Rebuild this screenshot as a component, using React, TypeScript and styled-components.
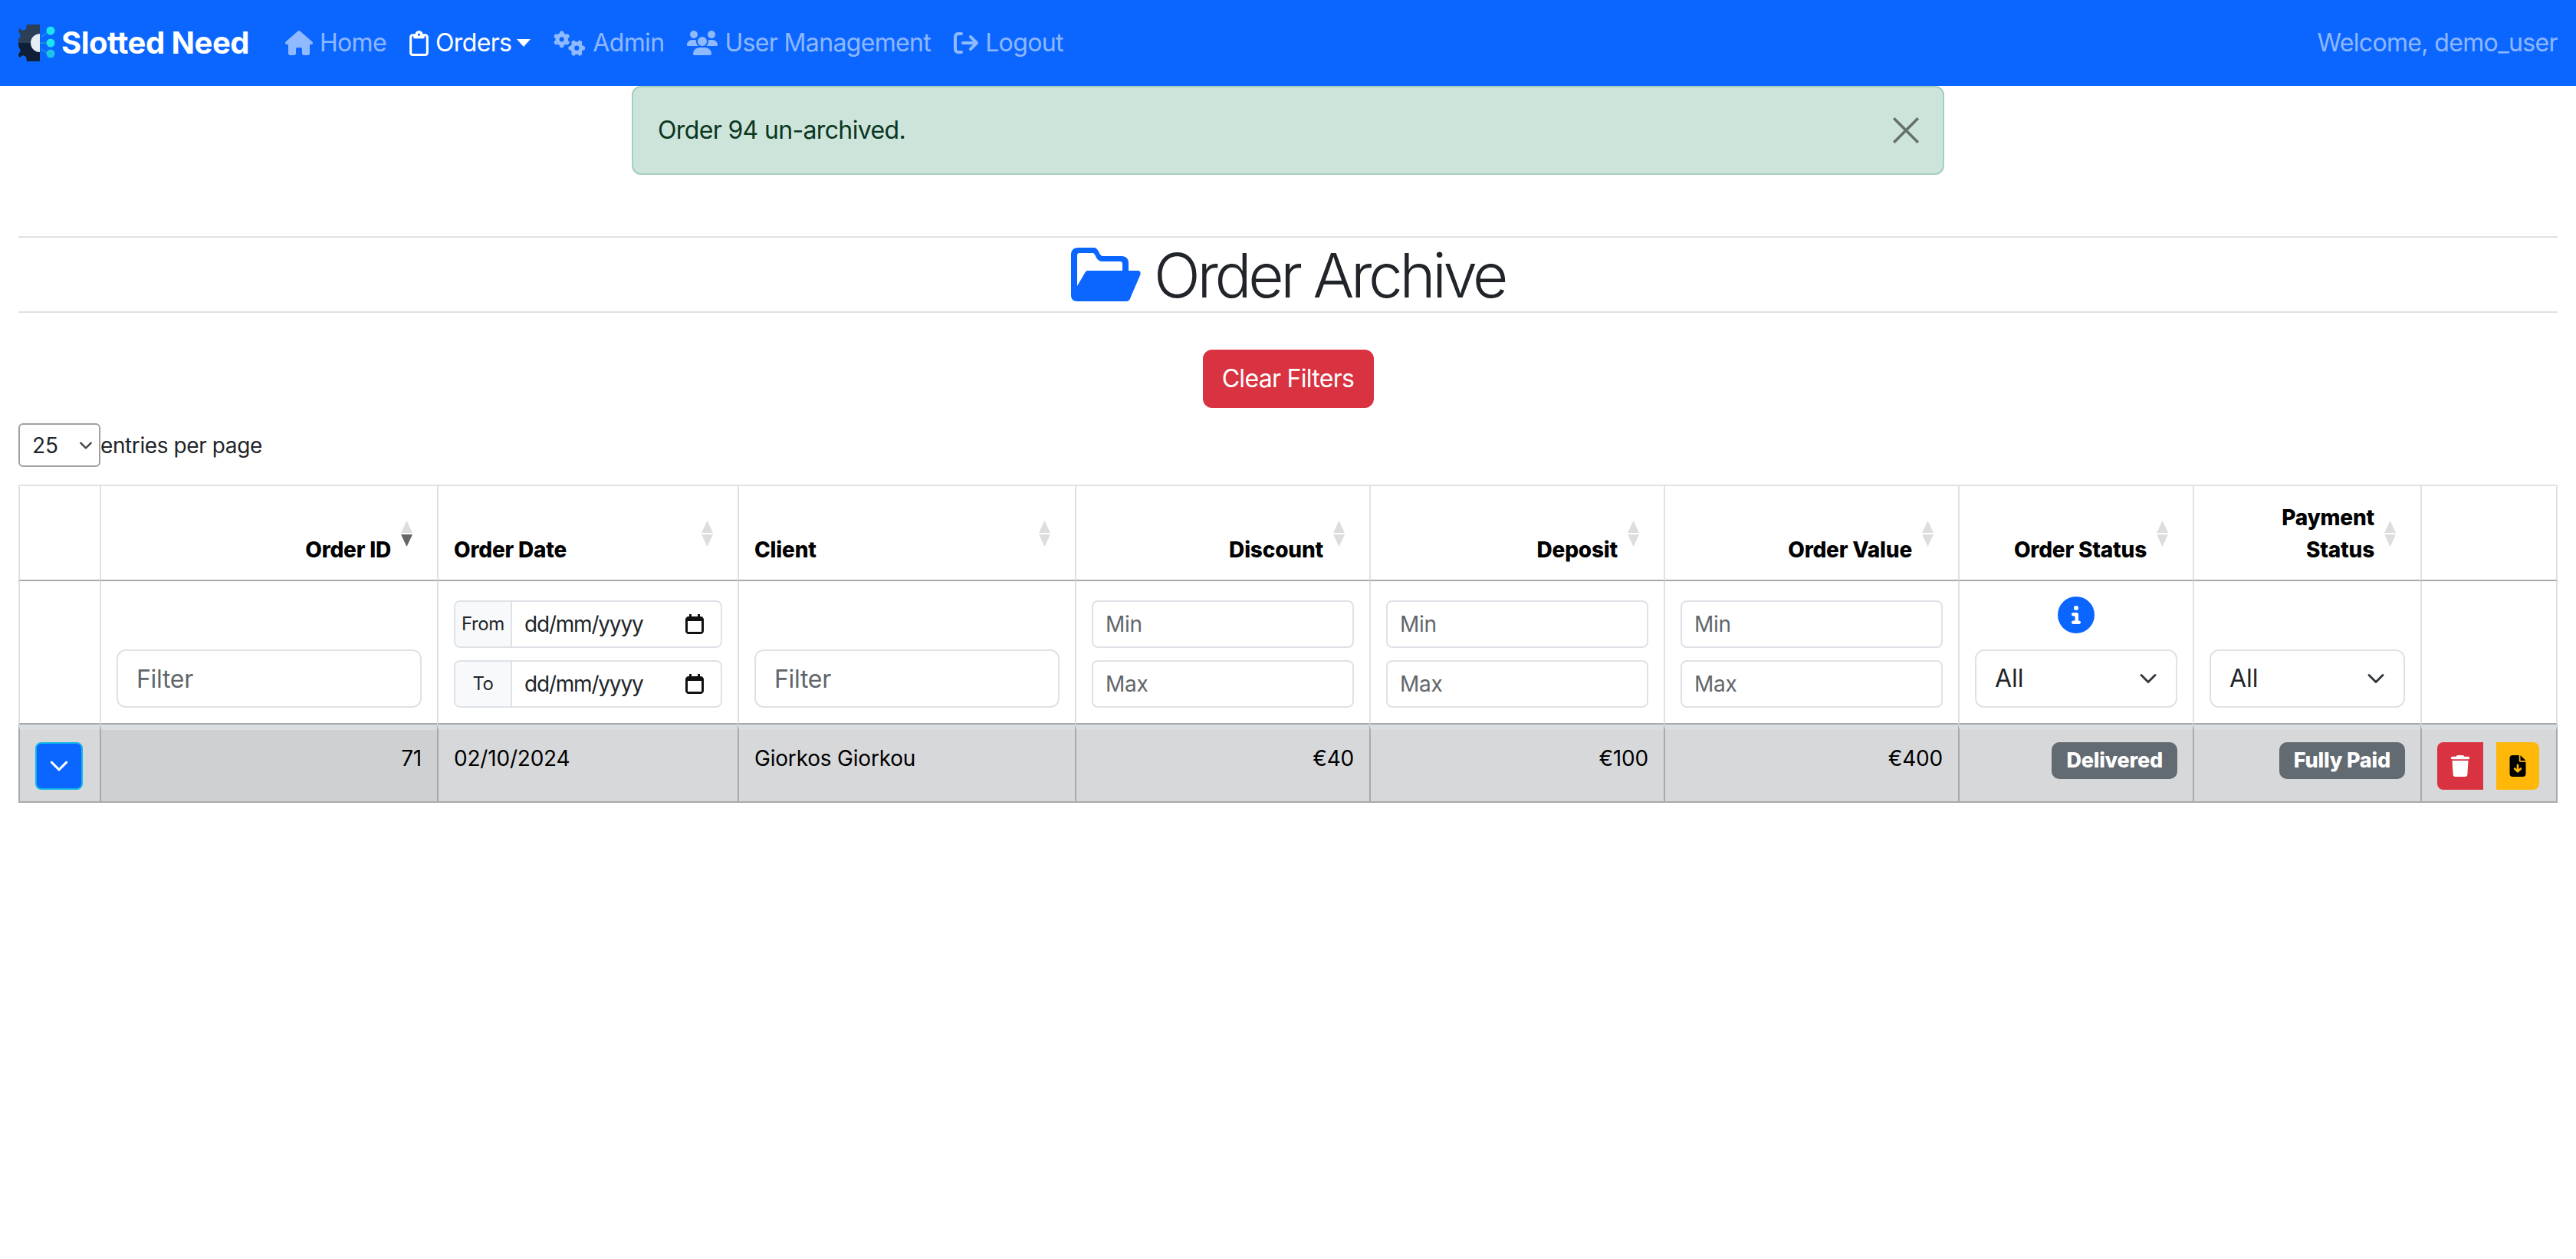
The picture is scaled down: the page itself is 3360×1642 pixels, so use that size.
import React from 'react';
import styled, { createGlobalStyle } from 'styled-components';
import { FaHouse, FaRegClipboard, FaGears, FaUsers, FaArrowRightFromBracket, FaCircleInfo, FaTrash, FaFileArrowDown } from 'react-icons/fa6';

const Global = createGlobalStyle`
  html, body { margin: 0; padding: 0; background: #fff; }
  body { font-family: Inter, "Liberation Sans", sans-serif; font-size: 32px; line-height: 1.5; color: #212529; }
  * { box-sizing: border-box; }
`;

const Nav = styled.nav`
  height: 112px; background: #0b66ff; display: flex; align-items: center;
  padding: 0 24px; justify-content: space-between; letter-spacing: -0.65px;
`;
const NavLeft = styled.div`display: flex; align-items: center;`;
const Brand = styled.a`
  display: flex; align-items: center; font-size: 40px; font-weight: 700; color: #fff; margin-right: 47px; letter-spacing: -0.5px;
  svg { margin-right: 8px; }
`;
const NavLink = styled.a<{ $active?: boolean }>`
  display: flex; align-items: center; gap: 9px; color: ${p => (p.$active ? '#fff' : 'rgba(255,255,255,.55)')};
  font-size: 32px; margin-right: 30px; white-space: nowrap;
`;
const HomeIcon = styled(FaHouse)`width: 36px; height: 32px;`;
const ClipIcon = styled(FaRegClipboard)`width: 25px; height: 33px;`;
const GearsIcon = styled(FaGears)`width: 42px; height: 33px;`;
const UsersIcon = styled(FaUsers)`width: 40px; height: 32px;`;
const LogoutIcon = styled(FaArrowRightFromBracket)`width: 32px; height: 32px;`;
const Caret = styled.span`
  width: 0; height: 0; border-top: 10px solid #fff; border-left: 9px solid transparent; border-right: 9px solid transparent; margin-left: -2px;
`;
const Welcome = styled.span`color: rgba(255,255,255,.55); font-size: 32px;`;

const Alert = styled.div`
  width: 1712px; height: 116px; margin: 0 auto 80px; background: #cde4da; border: 2px solid #a3cfbb; border-radius: 12px; letter-spacing: -0.65px;
  color: #0a3622; padding: 32px; display: flex; align-items: center; justify-content: space-between; font-size: 32px;
`;
const Close = styled.button`
  border: 0; background: none; padding: 0; display: flex; opacity: .5; margin-right: -2px;
`;
const Main = styled.main`padding: 0 24px;`;
const TitleBlock = styled.div`
  border-top: 2px solid #dee2e6; border-bottom: 2px solid #dee2e6; height: 100px;
  display: flex; align-items: center; justify-content: center; gap: 17px;
`;
const Title = styled.h1`margin: 2px 0 0; font-size: 80px; font-weight: 300; line-height: 1.2; letter-spacing: -4.4px;`;
const ClearRow = styled.div`display: flex; justify-content: center; margin: 48px 0 20px;`;
const ClearBtn = styled.button`
  background: #d93240; color: #fff; border: 2px solid #d93240; border-radius: 12px; font: inherit; font-size: 32px; letter-spacing: -0.7px;
  height: 76px; width: 223px; padding: 0;
`;
const Entries = styled.div`display: flex; align-items: center; font-size: 28px; color: #212529; height: 57px; margin-bottom: 23px; letter-spacing: -0.4px;`;
const chev = (c: string) => `url("data:image/svg+xml,%3csvg xmlns='http://www.w3.org/2000/svg' viewBox='0 0 16 16'%3e%3cpath fill='none' stroke='${c}' stroke-linecap='round' stroke-linejoin='round' stroke-width='2' d='m2 5 6 6 6-6'/%3e%3c/svg%3e")`;
const EntriesSelect = styled.select`
  appearance: none; width: 107px; height: 57px; font: inherit; font-size: 28px; color: #212529; background: #fff ${chev('%23444')} no-repeat right 8px center / 18px 18px;
  border: 2px solid #a0a0a0; border-radius: 6px; padding: 0 16px;
`;
const Table = styled.table`
  width: 3312px; table-layout: fixed; border-collapse: separate; border-spacing: 0; font-size: 28px; color: #000;
  border-top: 2px solid #dee2e6; letter-spacing: -0.2px;
`;
const Col = styled.col<{ $w: number }>`width: ${p => p.$w}px;`;
const Th = styled.th<{ $right?: boolean }>`
  position: relative; padding: 20px ${p => (p.$right ? '60px' : '20px')} 18px 20px; text-align: ${p => (p.$right ? 'right' : 'left')};
  vertical-align: bottom; font-weight: 800; height: 124px; border-left: 2px solid #dee2e6; border-bottom: 2px solid #a8a9aa; line-height: 42px;
  &:last-child { border-right: 2px solid #dee2e6; }
`;
const Sort = styled.span`
  position: absolute; top: 45px; right: 32px; display: flex; flex-direction: column; gap: 2px;
`;
const Tri = styled.i<{ $down?: boolean; $on?: boolean }>`
  display: block; width: 15px; height: 16px; background: ${p => (p.$on ? '#666' : '#ddd')};
  clip-path: ${p => (p.$down ? 'polygon(0 0,100% 0,50% 100%)' : 'polygon(50% 0,100% 100%,0 100%)')};
`;
const FilterCell = styled.td`
  padding: 20px 20px 20px; vertical-align: bottom; border-left: 2px solid #dee2e6; border-bottom: 2px solid #a8a9aa; height: 187px;
  &:last-child { border-right: 2px solid #dee2e6; }
`;
const Stack = styled.div`display: flex; flex-direction: column; gap: 16px;`;
const Input = styled.input`
  display: block; width: 100%; height: 76px; font: inherit; font-size: 32px; padding: 0 24px; border: 2px solid #dee2e6; border-radius: 12px; color: #212529; background: #fff; letter-spacing: -0.3px;
  &::placeholder { color: #62666a; }
`;
const SmallInput = styled(Input)`height: 62px; font-size: 28px; padding: 0 16px; border-radius: 8px;`;
const Select = styled.select`
  display: block; width: 100%; height: 76px; appearance: none; font: inherit; font-size: 32px; padding: 0 24px; border: 2px solid #dee2e6; border-radius: 12px; color: #212529;
  background: #fff ${chev('%23343a40')} no-repeat right 24px center / 24px 24px;
`;
const InfoWrap = styled.div`display: flex; justify-content: center; color: #0b66ff; margin-bottom: 21px;`;
const DateGroup = styled.div`
  display: flex; height: 62px; border: 2px solid #dee2e6; border-radius: 8px; overflow: hidden; font-size: 28px; color: #212529; background: #fff; letter-spacing: -1.2px;
`;
const DateLabel = styled.span`
  width: 74px; background: #f8f9fa; border-right: 2px solid #dee2e6; font-size: 24px; letter-spacing: -0.4px; display: flex; align-items: center; justify-content: center; flex: none;
`;
const DateValue = styled.span`flex: 1; display: flex; align-items: center; justify-content: space-between; padding: 0 22px 0 16px;`;
const Td = styled.td<{ $right?: boolean; $sorted?: boolean }>`
  padding: 16px 20px 15px; vertical-align: top; text-align: ${p => (p.$right ? 'right' : 'left')};
  background: ${p => (p.$sorted ? '#cfd0d2' : '#d7d8da')}; background-clip: padding-box; line-height: 42px;
  border-top: 7px solid #d8dee2; border-left: 2px solid #a8a9ab; border-bottom: 2px solid #a8a9ab; height: 102px;
  &:last-child { border-right: 2px solid #a8a9ab; }
`;
const ExpandBtn = styled.button`
  width: 62px; height: 62px; padding: 0; display: flex; align-items: center; justify-content: center; background: #0b66ff; border: 2px solid #12b5e8; border-radius: 8px;
`;
const Badge = styled.span`
  display: inline-block; height: 48px; line-height: 48px; padding: 0 19px; background: #626a72; color: #fff; font-weight: 800; font-size: 27px; border-radius: 10px; white-space: nowrap;
`;
const Actions = styled.div`display: flex; gap: 17px; justify-content: flex-start;`;
const ActionBtn = styled.button<{ $bg: string; $w: number; $side: 'left' | 'right' }>`
  width: ${p => p.$w}px; height: 62px; padding: 0; border: 0; display: flex; align-items: center; justify-content: center;
  background: ${p => p.$bg}; border-radius: ${p => (p.$side === 'left' ? '8px 0 0 8px' : '0 8px 8px 0')};
`;

const Logo = () => (
  <svg width="48" height="48" viewBox="0 0 48 48">
    <path d="M11 0h17v48H11l-1-6-4-2-5 3-1-4 3-5-2-4-3-1V19l3-1 2-4-3-5 1-4 5 3 4-2z" fill="#2b3f56" />
    <path d="M0 24h28v24H11l-1-6-4-2-5 3-1-4 3-5-2-4z" fill="#0f1f38" />
    <path d="M28 12a12 12 0 0 0 0 24z" fill="#e6edf5" />
    <path d="M28 24h14M30 16l12-9M30 32l12 9" stroke="#1c9ad8" strokeWidth="1.5" fill="none" />
    <circle cx="42" cy="8" r="5.5" fill="#1de3ee" /><circle cx="42" cy="24" r="5.5" fill="#1de3ee" /><circle cx="42" cy="38" r="5.5" fill="#1cc4e6" />
  </svg>
);
const FolderIcon = () => (
  <svg width="91" height="70" viewBox="0 0 91 70">
    <path fillRule="evenodd" fill="#0b66ff" d="M9 0h21c3 0 4 2 6 5 2 4 3 6 6 6h24c6 0 9 4 9 9v10h-8v-9c0-2-1-3-3-3H41c-5 0-7-3-9-7-1-2-2-4-4-4H11c-2 0-3 1-3 3v42L0 60V9C0 3 4 0 9 0z" />
    <path fill="#0b66ff" d="M0 58 8 50 18 33c1-2 2-3 4-3h65c3 0 4 2 3.500 5L78 64c-1 4-3 6-6 6H8c-5 0-8-3-8-8z" />
  </svg>
);
const SortIcon = ({ on }: { on?: boolean }) => (
  <Sort><Tri /><Tri $down $on={on} /></Sort>
);
const Chevron = () => (
  <svg width="26" height="26" viewBox="0 0 16 16"><path fill="none" stroke="#fff" strokeWidth="1.8" strokeLinecap="round" strokeLinejoin="round" d="m2 5 6 6 6-6" /></svg>
);
const Calendar = () => (
  <svg width="24" height="26" viewBox="0 0 24 26"><path fillRule="evenodd" fill="#111" d="M5 0h3v3h8V0h3v3h1c2 0 4 2 4 4v15c0 2-2 4-4 4H4c-2 0-4-2-4-4V7c0-2 2-4 4-4h1zM3 9v13c0 1 0 1 1 1h16c1 0 1 0 1-1V9z" /></svg>
);

const widths = [106, 440, 392, 440, 384, 384, 384, 306, 297, 179];
const MinMax = () => (
  <Stack><SmallInput placeholder="Min" /><SmallInput placeholder="Max" /></Stack>
);

export default function App() {
  return (
    <>
      <Global />
      <Nav>
        <NavLeft>
          <Brand><Logo />Slotted Need</Brand>
          <NavLink><HomeIcon />Home</NavLink>
          <NavLink $active><ClipIcon />Orders<Caret /></NavLink>
          <NavLink><GearsIcon />Admin</NavLink>
          <NavLink><UsersIcon />User Management</NavLink>
          <NavLink><LogoutIcon />Logout</NavLink>
        </NavLeft>
        <Welcome>Welcome, demo_user</Welcome>
      </Nav>
      <Alert>
        Order 94 un-archived.
        <Close aria-label="Close">
          <svg width="36" height="36" viewBox="0 0 16 16"><path d="M1 1l14 14M15 1 1 15" stroke="#000" strokeWidth="1.6" fill="none" /></svg>
        </Close>
      </Alert>
      <Main>
        <TitleBlock><FolderIcon /><Title>Order Archive</Title></TitleBlock>
        <ClearRow><ClearBtn>Clear Filters</ClearBtn></ClearRow>
        <Entries>
          <EntriesSelect defaultValue="25"><option>10</option><option>25</option><option>50</option></EntriesSelect>
          entries per page
        </Entries>
        <Table>
          <colgroup>{widths.map((w, i) => <Col key={i} $w={w} />)}</colgroup>
          <thead>
            <tr>
              <Th />
              <Th $right>Order ID<SortIcon on /></Th>
              <Th>Order Date<SortIcon /></Th>
              <Th>Client<SortIcon /></Th>
              <Th $right>Discount<SortIcon /></Th>
              <Th $right>Deposit<SortIcon /></Th>
              <Th $right>Order Value<SortIcon /></Th>
              <Th $right>Order Status<SortIcon /></Th>
              <Th $right>Payment<br />Status<SortIcon /></Th>
              <Th />
            </tr>
            <tr>
              <FilterCell />
              <FilterCell><Input placeholder="Filter" /></FilterCell>
              <FilterCell>
                <Stack>
                  <DateGroup><DateLabel>From</DateLabel><DateValue>dd/mm/yyyy<Calendar /></DateValue></DateGroup>
                  <DateGroup><DateLabel>To</DateLabel><DateValue>dd/mm/yyyy<Calendar /></DateValue></DateGroup>
                </Stack>
              </FilterCell>
              <FilterCell><Input placeholder="Filter" /></FilterCell>
              <FilterCell><MinMax /></FilterCell>
              <FilterCell><MinMax /></FilterCell>
              <FilterCell><MinMax /></FilterCell>
              <FilterCell>
                <InfoWrap><FaCircleInfo size={48} /></InfoWrap>
                <Select defaultValue="All"><option>All</option></Select>
              </FilterCell>
              <FilterCell><Select defaultValue="All"><option>All</option></Select></FilterCell>
              <FilterCell />
            </tr>
          </thead>
          <tbody>
            <tr>
              <Td><ExpandBtn aria-label="Expand"><Chevron /></ExpandBtn></Td>
              <Td $right $sorted>71</Td>
              <Td>02/10/2024</Td>
              <Td>Giorkos Giorkou</Td>
              <Td $right>€40</Td>
              <Td $right>€100</Td>
              <Td $right>€400</Td>
              <Td $right><Badge>Delivered</Badge></Td>
              <Td $right><Badge>Fully Paid</Badge></Td>
              <Td>
                <Actions>
                  <ActionBtn $bg="#d93240" $w={60} $side="left"><FaTrash size={28} color="#fff" /></ActionBtn>
                  <ActionBtn $bg="#ffb80a" $w={56} $side="right"><FaFileArrowDown size={28} color="#000" /></ActionBtn>
                </Actions>
              </Td>
            </tr>
          </tbody>
        </Table>
      </Main>
    </>
  );
}
